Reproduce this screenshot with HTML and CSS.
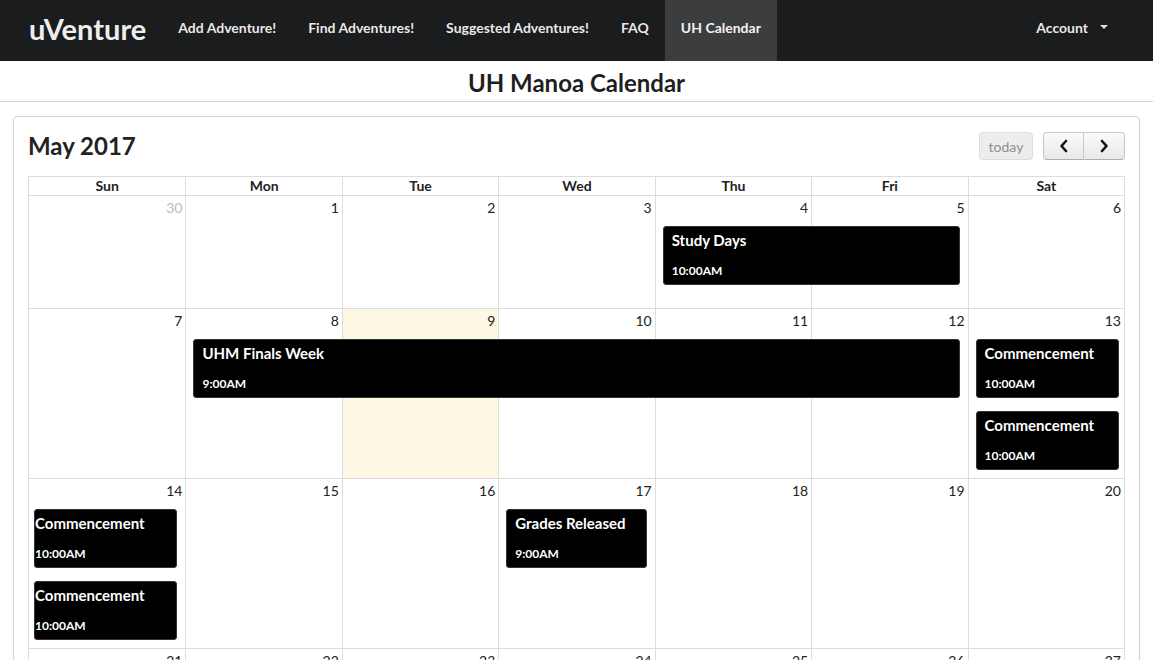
FILE: index.html
```html
<!DOCTYPE html>
<html>
<head>
<meta charset="utf-8">
<title>UH Manoa Calendar</title>
<link rel="stylesheet" href="styles.css">
</head>
<body>
<nav class="topnav">
  <div class="nav-item logo">uVenture</div>
  <div class="nav-item">Add Adventure!</div>
  <div class="nav-item">Find Adventures!</div>
  <div class="nav-item">Suggested Adventures!</div>
  <div class="nav-item">FAQ</div>
  <div class="nav-item active">UH Calendar</div>
  <div class="nav-spacer"></div>
  <div class="nav-item account">Account <span class="caret"></span></div>
</nav>

<header class="page-header">
  <h1>UH Manoa Calendar</h1>
</header>

<section class="card">
  <div class="toolbar">
    <h2 class="month">May 2017</h2>
    <div class="tools">
      <button class="btn today" disabled>today</button>
      <div class="btn-group">
        <button class="btn nav-btn"><svg width="10" height="14" viewBox="0 0 10 14"><polyline points="7,2 2.5,7 7,12" fill="none" stroke="#111" stroke-width="2.6" stroke-linecap="round" stroke-linejoin="round"/></svg></button>
        <button class="btn nav-btn"><svg width="10" height="14" viewBox="0 0 10 14"><polyline points="3,2 7.5,7 3,12" fill="none" stroke="#111" stroke-width="2.6" stroke-linecap="round" stroke-linejoin="round"/></svg></button>
      </div>
    </div>
  </div>

  <div class="calendar">
    <div class="dow">
      <div>Sun</div><div>Mon</div><div>Tue</div><div>Wed</div><div>Thu</div><div>Fri</div><div>Sat</div>
    </div>

    <div class="week w-short">
      <div class="bg c1"></div><div class="bg c2"></div><div class="bg c3"></div><div class="bg c4"></div><div class="bg c5"></div><div class="bg c6"></div><div class="bg c7"></div>
      <div class="num c1 other">30</div><div class="num c2">1</div><div class="num c3">2</div><div class="num c4">3</div><div class="num c5">4</div><div class="num c6">5</div><div class="num c7">6</div>
      <div class="event ev-mid r1 span-thu-fri"><div class="ev-title">Study Days</div><div class="ev-time">10:00AM</div></div>
    </div>

    <div class="week">
      <div class="bg c1"></div><div class="bg c2"></div><div class="bg c3 today-bg"></div><div class="bg c4"></div><div class="bg c5"></div><div class="bg c6"></div><div class="bg c7"></div>
      <div class="num c1">7</div><div class="num c2">8</div><div class="num c3">9</div><div class="num c4">10</div><div class="num c5">11</div><div class="num c6">12</div><div class="num c7">13</div>
      <div class="event ev-mid r1 span-mon-fri"><div class="ev-title">UHM Finals Week</div><div class="ev-time">9:00AM</div></div>
      <div class="event ev-sat r1 c7"><div class="ev-title">Commencement</div><div class="ev-time">10:00AM</div></div>
      <div class="event ev-sat r2 c7"><div class="ev-title">Commencement</div><div class="ev-time">10:00AM</div></div>
    </div>

    <div class="week">
      <div class="bg c1"></div><div class="bg c2"></div><div class="bg c3"></div><div class="bg c4"></div><div class="bg c5"></div><div class="bg c6"></div><div class="bg c7"></div>
      <div class="num c1">14</div><div class="num c2">15</div><div class="num c3">16</div><div class="num c4">17</div><div class="num c5">18</div><div class="num c6">19</div><div class="num c7">20</div>
      <div class="event ev-sun r1 c1"><div class="ev-title">Commencement</div><div class="ev-time">10:00AM</div></div>
      <div class="event ev-sun r2 c1"><div class="ev-title">Commencement</div><div class="ev-time">10:00AM</div></div>
      <div class="event ev-mid r1 c4"><div class="ev-title">Grades Released</div><div class="ev-time">9:00AM</div></div>
    </div>

    <div class="week w-short">
      <div class="bg c1"></div><div class="bg c2"></div><div class="bg c3"></div><div class="bg c4"></div><div class="bg c5"></div><div class="bg c6"></div><div class="bg c7"></div>
      <div class="num c1">21</div><div class="num c2">22</div><div class="num c3">23</div><div class="num c4">24</div><div class="num c5">25</div><div class="num c6">26</div><div class="num c7">27</div>
    </div>
  </div>
</section>
</body>
</html>
```

FILE: styles.css
```css
* { box-sizing: border-box; }

body {
  margin: 0;
  font-family: Lato, "Open Sans", "Liberation Sans", sans-serif;
  font-size: 14px;
  color: rgba(0, 0, 0, 0.87);
  background: #fff;
}

/* ---------- top navigation ---------- */
.topnav {
  display: flex;
  align-items: stretch;
  height: 61px;
  background: #1b1c1d;
  padding: 0 29px 0 13px;
}

.nav-item {
  display: flex;
  align-items: center;
  padding: 0 16px 7px;
  color: rgba(255, 255, 255, 0.92);
  font-weight: 700;
  font-size: 14px;
  white-space: nowrap;
}

.nav-item.logo {
  font-size: 29px;
  font-weight: 700;
  color: #eeeeee;
  padding-bottom: 5px;
}

.nav-item.active {
  background: #3c3d3e;
  color: #f2f2f2;
}

.nav-spacer { flex: 1; }

.account .caret {
  display: inline-block;
  width: 0;
  height: 0;
  margin-left: 12px;
  border-left: 4px solid transparent;
  border-right: 4px solid transparent;
  border-top: 4px solid rgba(255, 255, 255, 0.85);
}

/* ---------- page header ---------- */
.page-header {
  padding: 8px 0 4px;
  border-bottom: 1px solid #d4d4d5;
  text-align: center;
}

.page-header h1 {
  margin: 0;
  font-size: 24px;
  line-height: 28px;
  font-weight: 700;
  color: #1f1f1f;
}

/* ---------- card ---------- */
.card {
  margin: 15px 14px 0;
  padding: 15px 14px 0;
  border-radius: 4px;
  box-shadow: 0 1px 3px 0 #d4d4d5, 0 0 0 1px #d4d4d5;
  background: #fff;
}

.toolbar {
  display: flex;
  justify-content: space-between;
  align-items: center;
  height: 28px;
  margin-bottom: 16px;
}

.month {
  margin: 0;
  font-size: 24px;
  font-weight: 700;
  line-height: 28px;
  color: #222;
}

.tools {
  display: flex;
  align-items: center;
  gap: 10px;
}

.btn {
  height: 28px;
  font-family: inherit;
  font-size: 14px;
  padding: 0;
  border: 1px solid #c8c8c8;
  border-bottom-color: #adadad;
  background: linear-gradient(#fbfbfb, #e8e8e8);
  border-radius: 4px;
  display: flex;
  align-items: center;
  justify-content: center;
}

.btn.today {
  width: 54px;
  color: #8e8e8e;
  background: #ededed;
  border-color: #dcdcdc;
}

.btn-group { display: flex; }

.nav-btn {
  width: 41px;
}

.btn-group .nav-btn:first-child {
  border-top-right-radius: 0;
  border-bottom-right-radius: 0;
}

.btn-group .nav-btn:last-child {
  border-left: 0;
  border-top-left-radius: 0;
  border-bottom-left-radius: 0;
}

/* ---------- calendar grid ---------- */
.calendar {
  border: 1px solid #dddddd;
  border-bottom: 0;
}

.dow {
  display: grid;
  grid-template-columns: repeat(7, 1fr);
}

.dow > div {
  text-align: center;
  font-weight: 700;
  font-size: 14px;
  line-height: 18px;
  color: #222;
}

.dow > div + div { border-left: 1px solid #dddddd; }

.week {
  display: grid;
  grid-template-columns: repeat(7, 1fr);
  grid-template-rows: 30px auto auto 1fr;
  min-height: 170px;
  border-top: 1px solid #dddddd;
}

.week.w-short { min-height: 113px; }

.bg { grid-row: 1 / -1; }
.bg:not(.c1) { border-left: 1px solid #dddddd; }
.today-bg { background: #fcf8e3; }

.c1 { grid-column: 1; }
.c2 { grid-column: 2; }
.c3 { grid-column: 3; }
.c4 { grid-column: 4; }
.c5 { grid-column: 5; }
.c6 { grid-column: 6; }
.c7 { grid-column: 7; }

.num {
  grid-row: 1;
  text-align: right;
  padding: 3px 3px 0 0;
  line-height: 18px;
  font-size: 14px;
  color: #222;
}

.num.other { color: #bdbdbd; }

.r1 { grid-row: 2; }
.r2 { grid-row: 3; margin-top: 13px; }

.span-thu-fri { grid-column: 5 / 7; }
.span-mon-fri { grid-column: 2 / 7; }

.event {
  background: #000;
  color: #fff;
  border: 1px solid #333;
  border-radius: 3px;
  height: 59px;
  padding: 3px 8px 0;
  overflow: hidden;
  white-space: nowrap;
}

.ev-mid { margin-left: 8px; margin-right: 8px; }
.ev-sat { margin-left: 8px; margin-right: 5px; }
.ev-sun { margin-left: 5px; margin-right: 8px; padding-left: 0; }

.ev-title {
  font-size: 15px;
  font-weight: 700;
  line-height: 20px;
}

.ev-time {
  margin-top: 13px;
  font-size: 12px;
  font-weight: 700;
  line-height: 16px;
}
```
